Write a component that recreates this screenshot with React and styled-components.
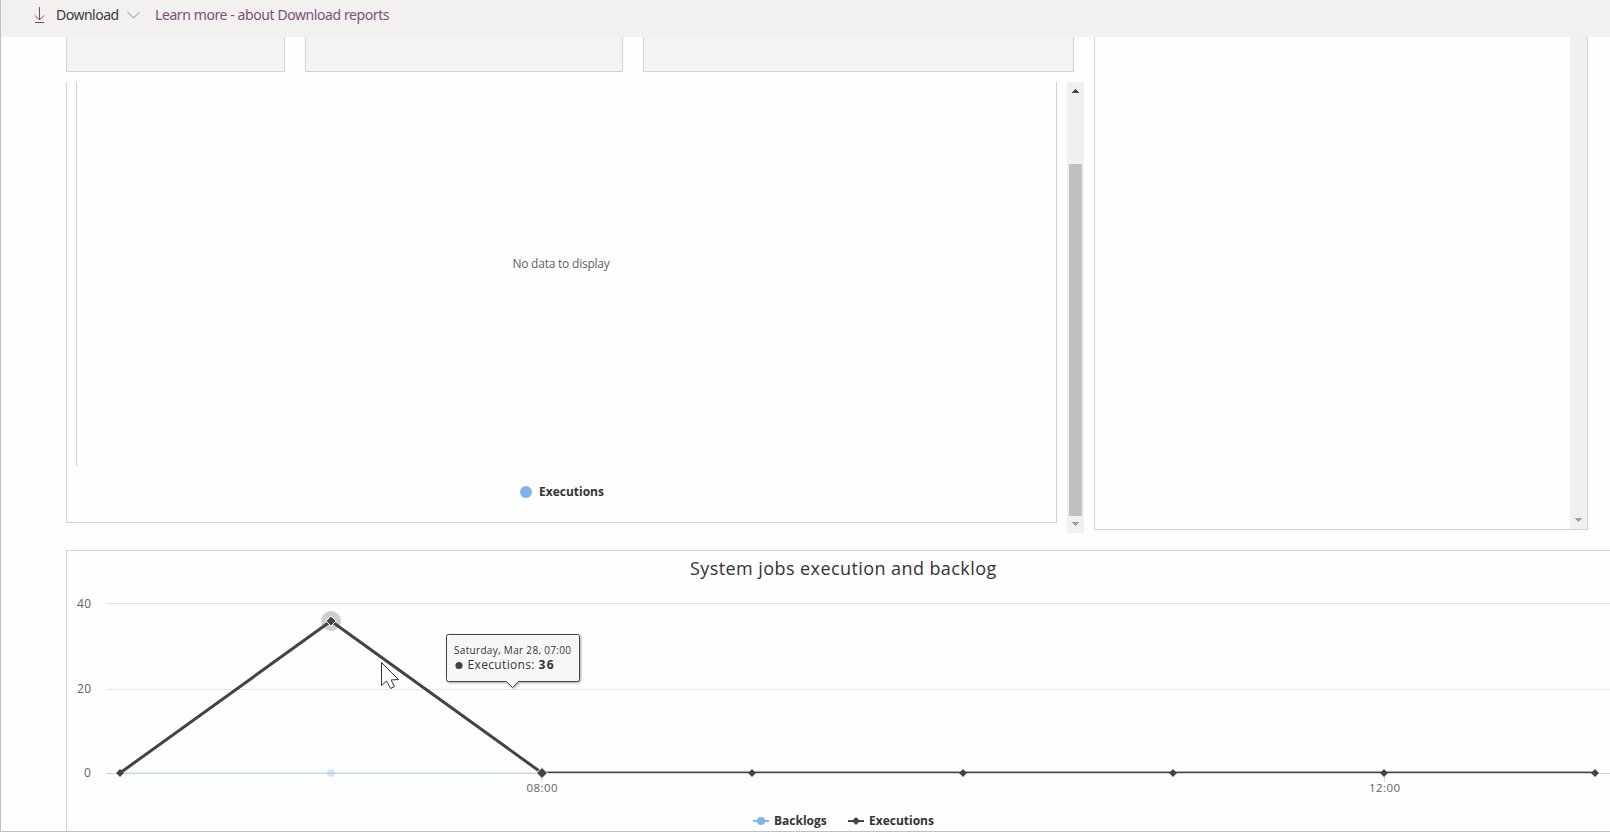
import React from "react";
import styled, { createGlobalStyle } from "styled-components";

const GlobalStyle = createGlobalStyle`
  * { box-sizing: border-box; }
  body { margin: 0; background: #fefefe; overflow: hidden; }
`;

const sans = `"Open Sans", "Noto Sans", sans-serif`;

const Page = styled.div`
  width: 1610px;
  height: 832px;
  overflow: hidden;
  display: flex;
  flex-direction: column;
  background: #fefefe;
  border-left: 1px solid #c0c0c0;
  border-bottom: 1px solid #c0c0c0;
  font-family: ${sans};
`;

const Toolbar = styled.header`
  flex: 0 0 37px;
  display: flex;
  align-items: center;
  padding: 0 0 7px 33px;
  background: #f3f1ef;
  font-family: "Noto Sans", sans-serif;
  font-size: 14px;
  line-height: 20px;
`;

const DownloadButton = styled.button`
  display: flex;
  align-items: center;
  padding: 0;
  border: 0;
  background: none;
  font: inherit;
  color: #3b3a39;
`;

const ButtonLabel = styled.span`
  width: 62px;
  margin: 0 9px 0 11px;
  white-space: nowrap;
  letter-spacing: -0.5px;
`;

const LearnLink = styled.a`
  margin-left: 15px;
  color: #7f4e7d;
  white-space: nowrap;
  letter-spacing: -0.41px;
`;

const Upper = styled.div`
  flex: 0 0 513px;
  display: flex;
  align-items: flex-start;
  gap: 10px;
  padding-left: 65px;
`;

const LeftColumn = styled.div`
  width: 1018px;
  display: flex;
  flex-direction: column;
  gap: 10px;
`;

const Cards = styled.div`
  display: flex;
  gap: 20px;
`;

const Card = styled.div`
  width: ${(p) => p.$width}px;
  height: 35px;
  border: 1px solid #d2d2d2;
  border-top: 0;
  background: #f3f3f3;
`;

const ScrollArea = styled.div`
  display: flex;
  justify-content: space-between;
  height: 451px;
`;

const EmptyChart = styled.section`
  width: 991px;
  height: 441px;
  display: flex;
  flex-direction: column;
  border: 1px solid #d2d2d2;
  border-top: 0;
  padding-left: 9px;
`;

const EmptyPlot = styled.div`
  height: 384px;
  padding: 171px 11px 0 0;
  border-left: 1px solid #c6d6ee;
  text-align: center;
  font-size: 12px;
  line-height: 22px;
  color: #606066;
  letter-spacing: -0.22px;
`;

const EmptyLegend = styled.div`
  display: flex;
  align-items: center;
  gap: 7px;
  padding: 15px 0 0 444px;
  font-size: 12px;
  font-weight: 700;
  line-height: 22px;
  color: #333;
`;

const Dot = styled.span`
  width: 12px;
  height: 12px;
  border-radius: 50%;
  background: #7cb5ec;
`;

const Track = styled.div`
  width: 17px;
  height: 100%;
  display: flex;
  flex-direction: column;
  align-items: center;
  background: #f0f0f0;
`;

const TrackEnd = styled.div`
  flex: 0 0 17px;
  display: flex;
  align-items: flex-start;
  padding-top: ${(p) => p.$offset}px;
`;

const Thumb = styled.div`
  width: 13px;
  height: 352px;
  margin-top: 65px;
  background: #c0c0c0;
`;

const SidePanel = styled.aside`
  width: 494px;
  height: 493px;
  display: flex;
  justify-content: flex-end;
  border: 1px solid #d2d2d2;
  border-top: 0;

  ${Track} { justify-content: flex-end; }
`;

const JobsChart = styled.section`
  flex: 1;
  min-height: 0;
  overflow: hidden;
  margin-left: 65px;
  border: 1px solid #d2d2d2;
  border-right: 0;
  border-bottom: 0;
`;

const ChartTitle = styled.h2`
  margin: 0;
  height: 35px;
  padding: 3px 0 0 623px;
  font-size: 18px;
  font-weight: 400;
  line-height: 28px;
  color: #333;
  white-space: nowrap;
  letter-spacing: 0.42px;
`;

const Plot = styled.svg`
  display: block;
  font-family: ${sans};
`;

const Legend = styled.div`
  display: flex;
  height: 22px;
  padding-left: 686px;
  font-size: 12px;
  font-weight: 700;
  line-height: 22px;
  color: #333;
`;

const LegendItem = styled.span`
  display: flex;
  align-items: center;
  gap: 5px;
  width: 95px;
`;

const Arrow = ({ up, color }) => (
  <svg width="7" height="4" shapeRendering="crispEdges">
    <path
      fill={color}
      d={up ? "M3 0h1v1h1v1h1v1h1v1H0V3h1V2h1V1h1z" : "M0 0h7v1H6v1H5v1H4v1H3V3H2V2H1V1H0z"}
    />
  </svg>
);

const points = [120, 331, 542, 752, 963, 1173, 1384, 1595];

const Diamond = ({ x, y, r = 4 }) => (
  <path d={`M${x} ${y - r}l${r} ${r}l${-r} ${r}l${-r} ${-r}z`} fill="#434348" />
);

const Tooltip = () => (
  <g>
    <path
      d="M448.5 634.5h129a2 2 0 0 1 2 2v43a2 2 0 0 1-2 2h-59l-6 6-6-6h-58a2 2 0 0 1-2-2v-43a2 2 0 0 1 2-2z"
      fill="#f7f7f7"
      stroke="#434348"
      filter="url(#shadow)"
    />
    <g fill="#333">
      <text x="454" y="654" fontSize="10" textLength="117">Saturday, Mar 28, 07:00</text>
      <circle cx="459" cy="665.5" r="3.6" fill="#434348" />
      <text x="467.5" y="669" fontSize="12" textLength="67">Executions:</text>
      <text x="538.5" y="669" fontSize="12" fontWeight="700" textLength="15">36</text>
    </g>
  </g>
);

function JobsPlot() {
  return (
    <Plot width="1543" height="224" viewBox="67 586 1543 224">
      <defs>
        <filter id="shadow" x="-10%" y="-10%" width="120%" height="130%">
          <feDropShadow dx="1" dy="1" stdDeviation="1" floodColor="#000" floodOpacity="0.35" />
        </filter>
      </defs>
      <g shapeRendering="crispEdges">
        <path d="M106 603.5h1504M106 689.5h1504" stroke="#e4e4e6" />
        <path d="M120 772.5h422" stroke="#e1effb" />
        <path d="M106 773.5h1504M541.5 773v9M1384.5 773v9" stroke="#ccd6eb" />
        <path d="M542 771.5h1053" stroke="#a6a6ae" />
        <path d="M542 772.5h1053" stroke="#434348" />
      </g>
      <g fontSize="12" fill="#606066">
        <text x="77" y="608" textLength="14">40</text>
        <text x="77" y="693" textLength="14">20</text>
        <text x="84" y="777">0</text>
        <text x="526.5" y="792" fontSize="11.5" textLength="31">08:00</text>
        <text x="1369" y="792" fontSize="11.5" textLength="31">12:00</text>
      </g>
      <circle cx="331" cy="773" r="4" fill="#7cb5ec" opacity="0.3" />
      <circle cx="331" cy="621" r="10" fill="#d0ccd2" />
      <path d="M120 773L331 621L542 773" fill="none" stroke="#434348" strokeWidth="3" strokeLinejoin="round" />
      <path d="M331 616l5 5-5 5-5-5z" fill="#434348" stroke="#fff" strokeWidth="1" />
      <path d="M542 767.5l5.5 5.5-5.5 5.5-5.5-5.5z" fill="#434348" stroke="#fff" strokeWidth="1" />
      {points.filter((x) => x !== 331 && x !== 542).map((x) => (
        <Diamond key={x} x={x} y={773} />
      ))}
      <Tooltip />
      <path
        d="M381.5 662.5v23l5-4.5 4 7.5 4-2-3.5-6.5 7.5-.5z"
        fill="#fff"
        stroke="#333"
      />
    </Plot>
  );
}

export default function App() {
  return (
    <>
      <GlobalStyle />
      <Page>
        <Toolbar>
          <DownloadButton>
            <svg width="11" height="16" fill="none" stroke="#7a4577" strokeWidth="1">
              <path d="M5.5 0v13M1 8.5L5.5 13 10 8.5M1 15.5h9" />
            </svg>
            <ButtonLabel>Download</ButtonLabel>
            <svg width="13" height="8" fill="none" stroke="#8a8886">
              <path d="M.5 1l6 6 6-6" />
            </svg>
          </DownloadButton>
          <LearnLink>Learn more - about Download reports</LearnLink>
        </Toolbar>
        <Upper>
          <LeftColumn>
            <Cards>
              <Card $width={219} />
              <Card $width={318} />
              <Card $width={431} />
            </Cards>
            <ScrollArea>
              <EmptyChart>
                <EmptyPlot>No data to display</EmptyPlot>
                <EmptyLegend>
                  <Dot />
                  Executions
                </EmptyLegend>
              </EmptyChart>
              <Track>
                <TrackEnd $offset={7}><Arrow up color="#434348" /></TrackEnd>
                <Thumb />
                <TrackEnd $offset={6}><Arrow color="#a0a0a0" /></TrackEnd>
              </Track>
            </ScrollArea>
          </LeftColumn>
          <SidePanel>
            <Track>
              <TrackEnd $offset={6}><Arrow color="#a0a0a0" /></TrackEnd>
            </Track>
          </SidePanel>
        </Upper>
        <JobsChart>
          <ChartTitle>System jobs execution and backlog</ChartTitle>
          <JobsPlot />
          <Legend>
            <LegendItem>
              <svg width="16" height="10">
                <path d="M0 5h16" stroke="#7cb5ec" strokeWidth="2" />
                <circle cx="8" cy="5" r="4" fill="#7cb5ec" />
              </svg>
              Backlogs
            </LegendItem>
            <LegendItem>
              <svg width="16" height="10">
                <path d="M0 5h16" stroke="#434348" strokeWidth="2" />
                <path d="M8 1l4 4-4 4-4-4z" fill="#434348" />
              </svg>
              Executions
            </LegendItem>
          </Legend>
        </JobsChart>
      </Page>
    </>
  );
}
